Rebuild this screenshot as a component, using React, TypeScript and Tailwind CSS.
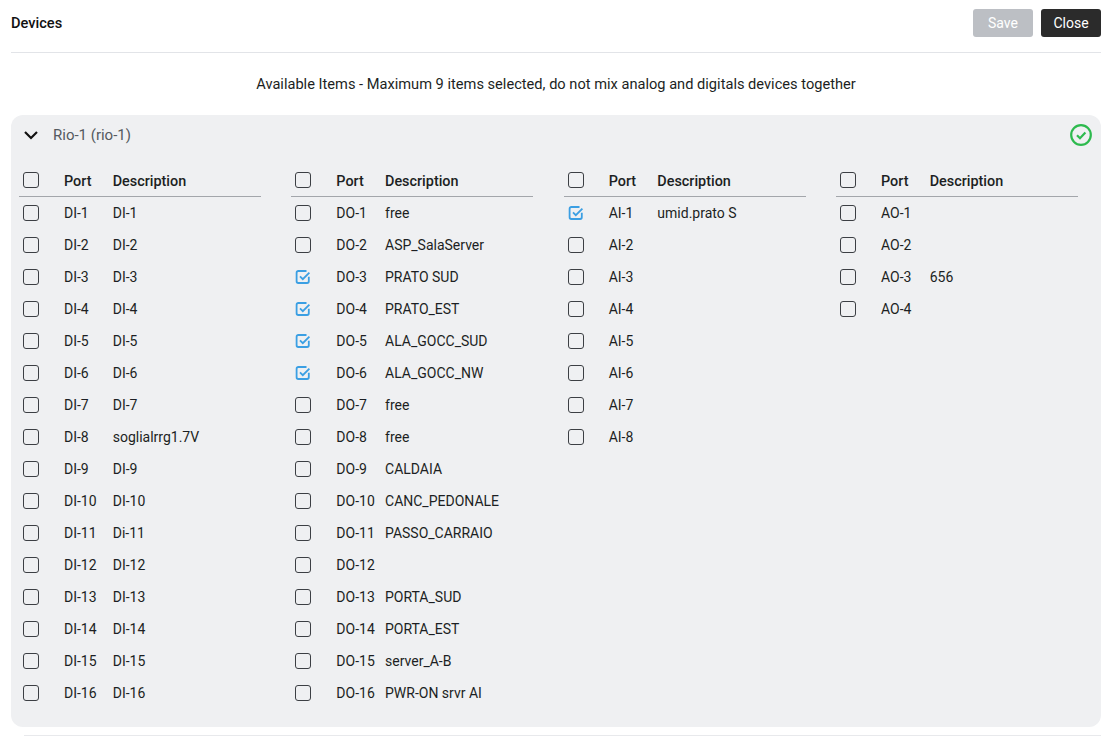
const columns = [
  {
    rows: [
      ["DI-1", "DI-1"], ["DI-2", "DI-2"], ["DI-3", "DI-3"], ["DI-4", "DI-4"],
      ["DI-5", "DI-5"], ["DI-6", "DI-6"], ["DI-7", "DI-7"], ["DI-8", "soglialrrg1.7V"],
      ["DI-9", "DI-9"], ["DI-10", "DI-10"], ["DI-11", "Di-11"], ["DI-12", "DI-12"],
      ["DI-13", "DI-13"], ["DI-14", "DI-14"], ["DI-15", "DI-15"], ["DI-16", "DI-16"],
    ],
    checked: [] as string[],
  },
  {
    rows: [
      ["DO-1", "free"], ["DO-2", "ASP_SalaServer"], ["DO-3", "PRATO SUD"], ["DO-4", "PRATO_EST"],
      ["DO-5", "ALA_GOCC_SUD"], ["DO-6", "ALA_GOCC_NW"], ["DO-7", "free"], ["DO-8", "free"],
      ["DO-9", "CALDAIA"], ["DO-10", "CANC_PEDONALE"], ["DO-11", "PASSO_CARRAIO"], ["DO-12", ""],
      ["DO-13", "PORTA_SUD"], ["DO-14", "PORTA_EST"], ["DO-15", "server_A-B"], ["DO-16", "PWR-ON srvr AI"],
    ],
    checked: ["DO-3", "DO-4", "DO-5", "DO-6"],
  },
  {
    rows: [
      ["AI-1", "umid.prato S"], ["AI-2", ""], ["AI-3", ""], ["AI-4", ""],
      ["AI-5", ""], ["AI-6", ""], ["AI-7", ""], ["AI-8", ""],
    ],
    checked: ["AI-1"],
  },
  {
    rows: [["AO-1", ""], ["AO-2", ""], ["AO-3", "656"], ["AO-4", ""]],
    checked: [] as string[],
  },
];

function Check({ on = false }: { on?: boolean }) {
  if (on) {
    return (
      <svg className="h-4 w-4 shrink-0" viewBox="0 0 16 16" fill="none" stroke="#3b9fe3" strokeWidth="1.8">
        <path d="M13.8 7.8v4.5a1.7 1.7 0 0 1-1.7 1.7H3.3a1.7 1.7 0 0 1-1.7-1.7V3.7A1.7 1.7 0 0 1 3.3 2h8.2" />
        <path d="M5 7.4l2.8 2.8 6.6-6.6" />
      </svg>
    );
  }
  return <span className="h-4 w-4 shrink-0 rounded-[3px] border-[1.5px] border-[#3c3f44]" />;
}

export default function App() {
  return (
    <div className="h-[736px] w-[1116px] overflow-hidden bg-white pl-[11px] pr-[15px] font-['Roboto',sans-serif] text-sm text-[#1c1f23]">
      {/* header */}
      <div className="flex h-[53px] items-start justify-between border-b border-[#e2e4e8] pt-[9px]">
        <span className="text-[14.6px] font-medium leading-7 text-[#111]">Devices</span>
        <div className="flex gap-2">
          <button className="h-7 w-[60px] rounded-[3px] bg-[#bcbfc4] text-white">Save</button>
          <button className="h-7 w-[60px] rounded-[3px] bg-[#2b2b2b] text-white">Close</button>
        </div>
      </div>

      <p className="mt-[21px] text-center text-[14.63px] leading-5">
        Available Items - Maximum 9 items selected, do not mix analog and digitals devices together
      </p>

      {/* accordion */}
      <div className="mt-[21px] h-[612px] rounded-xl bg-[#eff0f2] pl-2 pr-[23px]">
        <div className="relative flex h-10 items-center pl-[4px] text-[15px] leading-6 text-[#555a60]">
          <svg className="h-4 w-4" viewBox="0 0 16 16" fill="none" stroke="#111" strokeWidth="2.2">
            <path d="M2 5l6 6 6-6" />
          </svg>
          <span className="ml-[14px]">Rio-1 (rio-1)</span>
          <svg className="absolute -right-[14px] top-[9px] h-[22px] w-[22px]" viewBox="0 0 22 22" fill="none" stroke="#2dba4e" strokeWidth="2.2">
            <circle cx="11" cy="11" r="9.8" />
            <path d="M7 11.2l3 3 5.4-5.6" />
          </svg>
        </div>

        <div className="mt-[10px] grid grid-cols-[repeat(4,242px)] justify-between">
          {columns.map((col) => (
            <div key={col.rows[0][0]}>
              <div className="flex h-8 items-center border-b border-[#a3a6ab] pb-[1px] pl-1 text-[14.4px] font-medium leading-6">
                <Check />
                <span className="ml-[25px] mt-[3px] w-[48.7px]">Port</span>
                <span className="mt-[3px]">Description</span>
              </div>
              {col.rows.map(([port, desc]) => (
                <div key={port} className="flex h-8 items-center pl-1">
                  <Check on={col.checked.includes(port)} />
                  <span className="ml-[25px] w-[48.7px]">{port}</span>
                  <span>{desc}</span>
                </div>
              ))}
            </div>
          ))}
        </div>
      </div>

      <div className="ml-[13px] mt-[8px] border-t border-[#e8e9ec]" />
    </div>
  );
}
